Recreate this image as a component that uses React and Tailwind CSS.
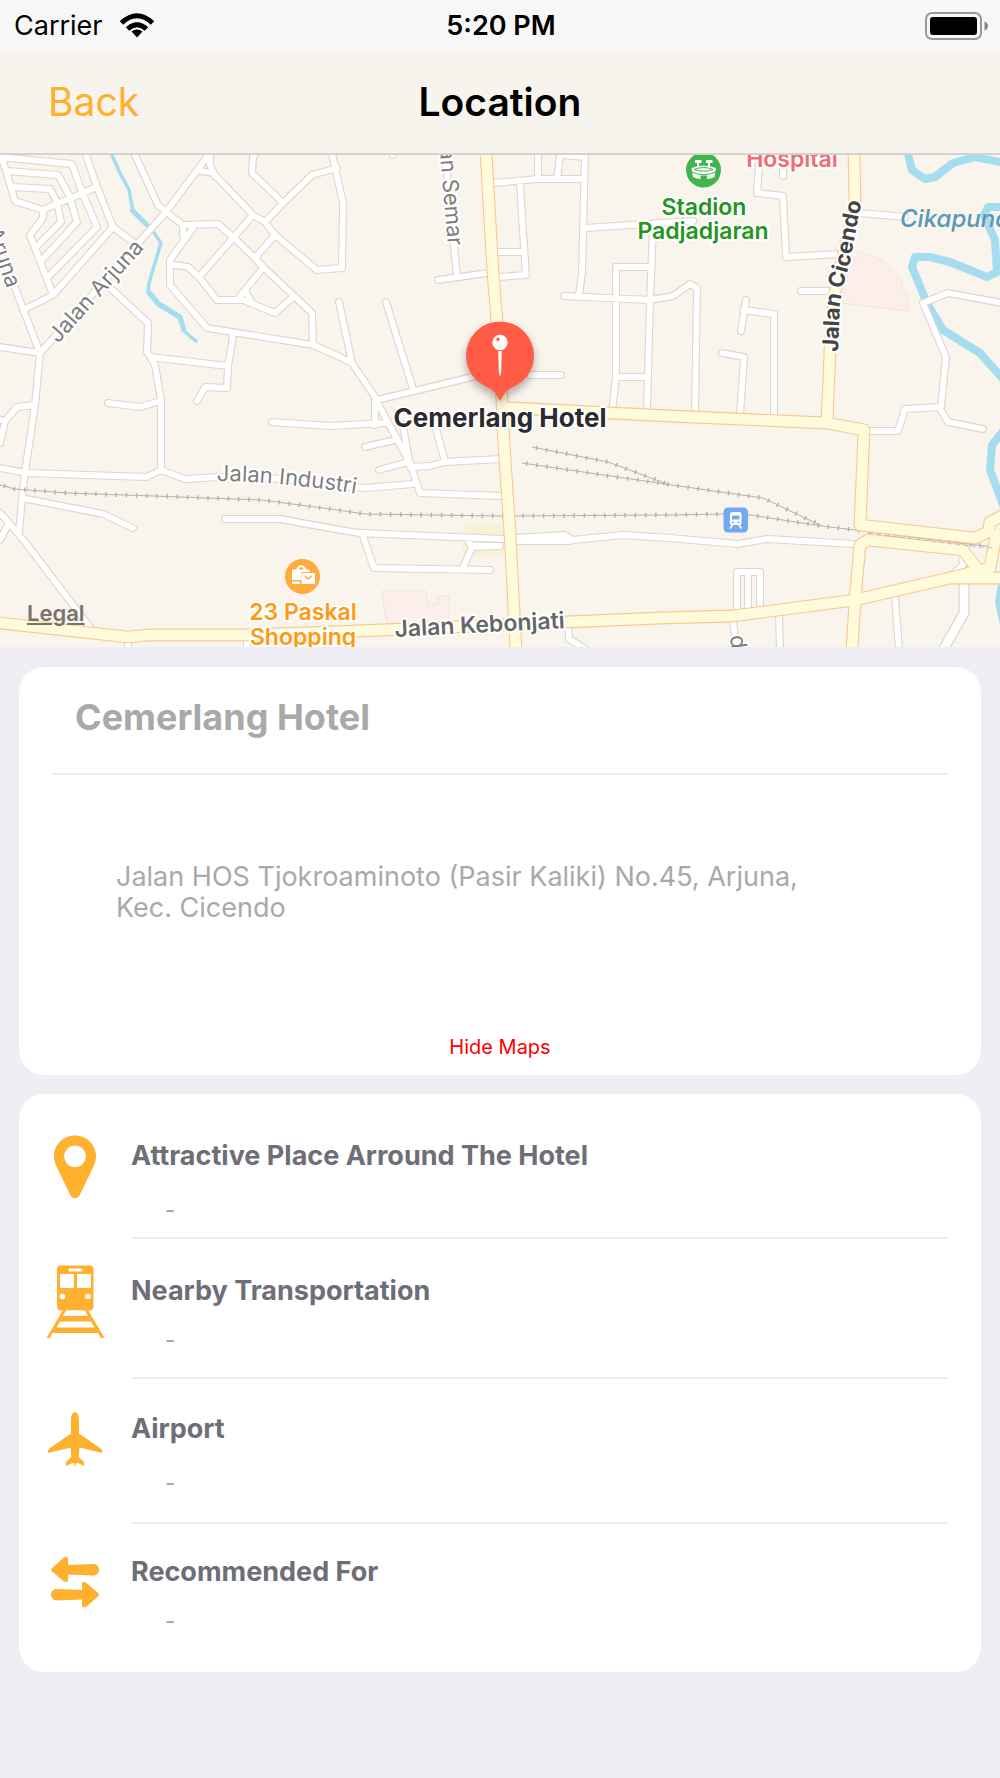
import React, { useState } from 'react';

const SMALL_ROADS = [
  'M0 157L72 164L82 192L97 227L47 278',
  'M7 171L58 175L69 195L77 222L42 260',
  'M12 187L50 189L57 202L61 222L35 248',
  'M2 158L15 201L43 210L97 187',
  'M43 210V218L30 235L53 295L113 227',
  'M53 295L23 310',
  'M86 155L97 187L113 227L137 245',
  'M0 250L15 288L40 353',
  'M0 347L40 353L35 405L25 472L22 498L19 532',
  'M40 353L166 212L210 153',
  'M35 405L17 407L5 421L0 443M0 420L5 421',
  'M107 285L148 323L147 352L155 365L161 400V470',
  'M150 357L228 366',
  'M233 333L232 343L228 366L227 388L205 387L197 401',
  'M108 403L140 407L160 401',
  'M135 155L158 205L166 212L183 225L218 224L233 237L255 258L263 267L293 295L312 313L313 345',
  'M183 225V236M193 228L170 260V285L207 328L313 345L340 357L352 363',
  'M170 264L188 267L199 277L217 300H243L275 313L293 297',
  'M199 277L253 215',
  'M210 155V165L215 176M200 171L213 173L253 215L265 222L275 235L317 270L342 268L343 203L335 167L332 153',
  'M255 258L275 235',
  'M263 268L245 290L251 302M245 290L238 299',
  'M265 222L283 203L312 175L337 168',
  'M256 153L253 157L252 173L283 203',
  'M339 302L352 363L377 400',
  'M386 302L413 389',
  'M377 400L472 377M530 375H561',
  'M438 280L488 273M445 155L457 276',
  'M393 152V155',
  'M493 183L538 179H582M538 155V179M560 155L557 179M563 155L585 157',
  'M520 182L522 217L526 275L498 277M497 252H522',
  'M585 155L582 273L579 295',
  'M585 228L693 221',
  'M564 296L650 300L673 296L690 284L697 288L695 415',
  'M653 228L650 300L647 412',
  'M652 267H616V377L612 412M616 377H647',
  'M759 165L757 193L783 196L786 257L840 254M783 165V176',
  'M860 213L905 217M801 291H828',
  'M746 300L741 331M743 310L774 314V415',
  'M722 353L744 357L740 415',
  'M1002 303L948 293L923 303L946 357L941 407L905 409L898 431H868M939 407L948 422L983 429',
  'M0 468L27 473L147 477L161 470L185 479L220 477L290 479L345 486L365 488L413 484',
  'M22 498L103 514L133 528',
  'M225 519H280L340 530L360 533L503 539L515 538L565 535L572 540L623 535L670 538L738 544L767 539L855 544',
  'M515 541H570',
  'M272 422L330 426L385 423',
  'M0 513L9 523L25 542L92 630M0 540L8 525',
  'M128 636V650M247 636V650',
  'M375 400V425M377 402L410 463L420 493L502 496',
  'M365 447L395 440M379 470L408 462M403 425L410 467M435 425L445 462',
  'M410 467L430 466L445 462L500 459',
  'M362 533L374 568L490 570M463 568L472 547L500 546M466 538L472 547',
  'M568 625L569 639L587 650',
  'M737 612V572H760V612M748 572V612',
  'M779 615L780 650M733 620L736 650M895 597L899 650',
  'M962 555L963 565L950 577',
];

const MAIN_ROADS = [
  'M486 153L493 273L497 322L502 400L503 430L510 533L516 650',
  'M502 408H512L670 416L827 423L864 430L860 525L975 538L988 532L990 522L1004 515',
  'M854 153L855 205L845 247L834 297L830 350L827 423',
  'M852 650L855 600L860 545L868 540L963 550L978 570',
  'M0 623L128 637L148 635H247L357 631L660 618L732 616L855 600L950 578H1004M950 578L990 568L997 530',
];

const RAILS = [
  'M0 485L15 489L67 493L153 496L262 500L330 509L365 514L502 516L670 515L723 514L750 515L822 526L880 533L993 547',
  'M532 447L608 462L667 484',
  'M522 463L665 484L763 498L822 526',
];

const WATER =
  'M907 150L912 170L925 179L935 177L953 163L975 157L1005 163M1004 207H988L984 215L995 240L997 272L987 277L950 262L930 257H915L912 267L927 303L943 330L980 353L1004 380M1004 430L992 445L990 470L1004 507M1002 585L999 602L1004 625';

const ROWS = [
  { id: 'place', title: 'Attractive Place Arround The Hotel', icon: PinIcon, row: 'min-h-[145px] pt-[34px]', gap: 'mt-[22px]' },
  { id: 'transport', title: 'Nearby Transportation', icon: TrainIcon, row: 'min-h-[140px] pt-6', gap: 'mt-[17px]' },
  { id: 'airport', title: 'Airport', icon: PlaneIcon, row: 'min-h-[145px] pt-[22px]', gap: 'mt-[22px]' },
  { id: 'recommended', title: 'Recommended For', icon: ArrowsIcon, row: 'min-h-[148px] pt-5', gap: 'mt-[17px]' },
];

function PinIcon() {
  return (
    <svg viewBox="37 1128 76 76" className="size-[76px] shrink-0 fill-[#ffb02e]" aria-hidden="true">
      <path
        fillRule="evenodd"
        d="M75 1135.500C63.500 1135.500 54 1144.500 54 1156C54 1160 55 1163 56.500 1166.500L70.500 1195.500C72.500 1199 77.500 1199 79.500 1195.500L93.500 1166.500C95 1163 96 1160 96 1156C96 1144.500 86.500 1135.500 75 1135.500ZM75 1145.500A10.800 10.800 0 1 1 75 1167.100A10.800 10.800 0 1 1 75 1145.500Z"
      />
    </svg>
  );
}

function TrainIcon() {
  return (
    <svg viewBox="37 1263 76 76" className="size-[76px] shrink-0" aria-hidden="true">
      <rect x="57" y="1265.500" width="36.500" height="45" rx="4" fill="#ffb02e" />
      <g fill="#fff">
        <rect x="68.500" y="1268.500" width="14" height="3" rx="1" />
        <rect x="60" y="1274" width="14" height="14" />
        <rect x="77" y="1274" width="14" height="14" />
        <circle cx="62.500" cy="1296.500" r="2.800" />
        <circle cx="88" cy="1296.500" r="2.800" />
      </g>
      <path d="M63 1310H67L65.500 1316H84.500L83 1310H88L104.500 1338H101L98 1333H52.500L50 1338H46.500Z" fill="#ffb02e" />
      <path d="M66 1310.500H85L88 1316H63ZM60 1321.500H91L94.500 1327.500H56.500Z" fill="#fff" />
    </svg>
  );
}

function PlaneIcon() {
  return (
    <svg viewBox="37 1401 76 76" className="size-[76px] shrink-0 fill-[#ffb02e]" aria-hidden="true">
      <path d="M75 1412C77.500 1412 79 1416 79 1420V1433.500L100 1448C102 1449.500 102.500 1451 102 1453L79.500 1447.500C79 1451 79 1454 78.700 1457L83 1461C84.500 1462.500 84.500 1464 84 1466L79 1463.500L76 1463L75 1467.500L74 1463L71 1463.500L66.300 1466C65.500 1464 65.800 1462.500 67 1461L71.300 1457C71 1454 71 1451 70.800 1447.500L48 1453C47.500 1451 48 1449.500 50 1448L71 1433.500V1420C71 1416 72.500 1412 75 1412Z" />
    </svg>
  );
}

function ArrowsIcon() {
  return (
    <svg viewBox="37 1544 76 76" className="size-[76px] shrink-0 fill-[#ffb02e]" aria-hidden="true">
      <path d="M52 1568L64 1557.500C66 1556.500 68 1557 68 1559V1565L93 1564C97 1564 99 1566.500 99 1569.500S97 1575.500 93 1575.500L68 1574.500V1580C68 1582 66 1582.500 64 1581.500L52 1571.500C51 1570.500 51 1569 52 1568Z" />
      <path d="M98 1593L86 1582.500C84 1581.500 82 1582 82 1584V1590L57 1589C53 1589 51 1591.500 51 1594.500S53 1600.500 57 1600.500L82 1599.500V1605C82 1607.500 84 1608 86 1607L98 1596.500C99.300 1595.500 99.300 1594 98 1593Z" />
    </svg>
  );
}

function StatusBar() {
  return (
    <div className="grid h-[51px] grid-cols-3 items-center bg-[#f7f7f7] pl-[14px] pr-3 text-[27px] leading-8">
      <div className="flex items-center gap-[17px]">
        <span>Carrier</span>
        <svg viewBox="121 12 34 25" className="h-[25px] w-[34px]" fill="none" stroke="#000" strokeWidth="5" aria-hidden="true">
          <path d="M122.500 22Q138 7.500 153.500 22" />
          <path d="M128.500 28Q138 19.500 147.500 28" />
          <path d="M132.500 30.500Q138 26.500 143.500 30.500L138 36.500Z" fill="#000" stroke="none" />
        </svg>
      </div>
      <span className="text-center font-semibold">5:20 PM</span>
      <svg viewBox="925 10 63 28" className="h-7 w-[63px] justify-self-end" aria-hidden="true">
        <rect x="926" y="11" width="55" height="26" rx="6" fill="none" stroke="#999" strokeWidth="2" />
        <rect x="930" y="15" width="47" height="18" rx="3" />
        <path d="M984.500 19.500Q988 21 988 24T984.500 28.500Z" fill="#888" />
      </svg>
    </div>
  );
}

function MapView() {
  return (
    <section aria-label="Map" className="relative h-[492px] overflow-hidden bg-[#f9f4ec]">
      <svg viewBox="0 155 1000 492" preserveAspectRatio="xMidYMid slice" className="size-full" fontFamily="Inter, sans-serif">
        <defs>
          <path id="arjuna" d="M58 344L150 242" />
          <path id="industri" d="M217 481Q280 481 370 496" />
          <path id="cicendo" d="M838 352L840 303Q843 285 850 262L864 188" />
          <filter id="pinShadow" x="-30%" y="-30%" width="160%" height="160%">
            <feDropShadow dx="0" dy="5" stdDeviation="4" floodOpacity="0.3" />
          </filter>
        </defs>

        {/* areas */}
        <g fill="#fbeeeb" stroke="#f8e1df" strokeWidth="1">
          <path d="M858 251L882 260L902 280V293H908V311L842 303L850 257L858 258Z" />
          <path d="M382 591H426L428 604H438V596H449V624H388L385 613Z" />
        </g>
        <rect x="463" y="523" width="41" height="34" fill="#f9f0d8" />

        {/* rivers */}
        <g fill="none" stroke="#a5dcf0" strokeLinejoin="round">
          <path d={WATER} strokeWidth="8" />
          <path d="M111 153L120 173L129 190L133 211L152 230L161 243L149 283L148 293L158 305L180 318L185 332L197 342" strokeWidth="3.500" />
          <path d="M131 209L150 228M148 291L158 303L180 317L184 331" strokeWidth="5" />
        </g>

        {/* roads: casing first, then fill */}
        <g fill="none" strokeLinecap="round" strokeLinejoin="round">
          <path d={SMALL_ROADS.join('')} stroke="#ddd6cc" strokeWidth="8" />
          <path d="M964 580V613L943 650" stroke="#ddd6cc" strokeWidth="11" />
          <path d={SMALL_ROADS.join('')} stroke="#fff" strokeWidth="5.800" />
          <path d="M964 580V613L943 650" stroke="#fff" strokeWidth="8.500" />
        </g>
        <path d="M515 536L565 534L570 541H515ZM470 543H502V549H470Z" fill="#fff" />
        {RAILS.map((d) => (
          <g key={d} fill="none" stroke="#b2b2b2">
            <path d={d} strokeWidth="1" />
            <path d={d} strokeWidth="4.500" strokeDasharray="1.500 8.700" strokeDashoffset="-4" />
          </g>
        ))}
        <g fill="none" strokeLinejoin="round">
          <path d={MAIN_ROADS.join('')} stroke="#f8c893" strokeWidth="12.800" />
          <path d={MAIN_ROADS.join('')} stroke="#fdfbda" strokeWidth="10.600" />
        </g>
        <path d="M868 533L960 545L993 548" fill="none" stroke="#c5c0ae" strokeWidth="1" strokeDasharray="5 3" />

        {/* street names */}
        <g fill="#7d7d7d" stroke="#fff" strokeWidth="4" strokeLinejoin="round" style={{ paintOrder: 'stroke' }} fontSize="22">
          <text><textPath href="#arjuna">Jalan Arjuna</textPath></text>
          <text><textPath href="#industri">Jalan Industri</textPath></text>
          <text transform="translate(7 289) rotate(71)" textAnchor="end">Jalan Aruna</text>
          <text transform="translate(448 246) rotate(85)" textAnchor="end">Jalan Semar</text>
          <text transform="translate(730 636) rotate(83)">d</text>
          <text transform="translate(395 637) rotate(-3)" fontSize="23" fontWeight="600" fill="#666">Jalan Kebonjati</text>
          <text fontSize="22" fontWeight="700" fill="#444"><textPath href="#cicendo">Jalan Cicendo</textPath></text>
          <text x="900" y="227" fontSize="24" fontWeight="500" fontStyle="italic" fill="#5598b8" stroke="none">Cikapundung</text>
        </g>

        {/* places */}
        <g stroke="#fff" strokeWidth="4" strokeLinejoin="round" style={{ paintOrder: 'stroke' }} fontSize="23" fontWeight="600" textAnchor="middle">
          <text x="792" y="167" fill="#f26b70">Hospital</text>
          <text x="704" y="215" fill="#23961f">Stadion</text>
          <text x="703" y="239" fill="#23961f">Padjadjaran</text>
          <text x="303" y="620" fill="#ff9a12">23 Paskal</text>
          <text x="303" y="645" fill="#ff9a12">Shopping</text>
        </g>

        <circle cx="703.500" cy="170" r="17.500" fill="#3fb54c" />
        <g fill="#fff">
          <rect x="695" y="160" width="6.500" height="3" />
          <rect x="706" y="160" width="6.500" height="3" />
          <rect x="697" y="162" width="2" height="5" />
          <rect x="708" y="162" width="2" height="5" />
          <path d="M691.500 168Q703.500 163 716 168L714.500 177Q711 179 707 179V175.500H700.500V179Q696 179 693 177Z" />
          <path d="M694 169.500Q703.500 165.500 713 169.500Q703.500 173 694 169.500ZM692 172Q703.500 177.500 715.500 172" fill="none" stroke="#3fb54c" strokeWidth="1" />
        </g>

        <circle cx="302.500" cy="576.500" r="17.500" fill="#ffab3d" />
        <g>
          <path d="M297.500 570V569Q301 563 305 569V570" fill="none" stroke="#fff" strokeWidth="2.200" />
          <path d="M292 569.500H309.500V572H301.500V580H292ZM292 581.500H300V584H292Z" fill="#fff" />
          <rect x="301.500" y="573" width="13.500" height="11" rx="1" fill="#fff" />
          <path d="M305 575.500Q308.200 582 311.500 575.500" fill="none" stroke="#ffab3d" strokeWidth="1.500" />
        </g>

        <rect x="723.500" y="507.500" width="24.500" height="25" rx="4.500" fill="#74a9f0" />
        <path fillRule="evenodd" fill="#fff" d="M732.500 512H739Q741.500 512 741.500 515V523Q741.500 525 739.500 525H732Q730 525 730 523V515Q730 512 732.500 512ZM732 515.500V519.500H739.500V515.500ZM732 521.500V523H734V521.500ZM737.500 521.500V523H739.500V521.500Z" />
        <path d="M732.500 525L730 528.500M739 525L741.500 528.500" stroke="#fff" strokeWidth="1.500" />

        {/* hotel marker */}
        <path
          d="M500 401L495 393C492 389 488 388 484 385.500C473 379.500 466 369 466 355.500A34 34 0 0 1 534 355.500C534 369 527 379.500 516 385.500C512 388 508 389 505 393Z"
          fill="#ff5c47"
          filter="url(#pinShadow)"
        />
        <circle cx="500" cy="342.500" r="7.700" fill="#fff" />
        <circle cx="498" cy="339.300" r="1.700" fill="#ff5c47" />
        <path d="M498.300 351H501.700L501.200 372L500 377L498.800 372Z" fill="#fff" />
        <text x="500" y="427" textAnchor="middle" fontSize="26" fontWeight="700" fill="#2b2b2b" stroke="#fff" strokeWidth="4" strokeLinejoin="round" style={{ paintOrder: 'stroke' }}>
          Cemerlang Hotel
        </text>
      </svg>
      <a href="#legal" className="absolute bottom-5 left-[27px] text-[22px] leading-7 font-semibold text-[#77736d] underline">
        Legal
      </a>
    </section>
  );
}

const InfoRow = ({ item, last }) => {
  const Icon = item.icon;
  return (
    <li className={`flex gap-[18px] pl-[18px] pr-[34px] ${item.row}`}>
      <Icon />
      <div className={`flex-1 pt-3 ${last ? '' : 'border-b-2 border-[#ededf2]'}`}>
        <h2 className="text-[27px] leading-8 font-bold text-[#6d6e78]">{item.title}</h2>
        <p className={`pl-[34px] text-[22px] leading-8 font-medium text-[#a9a9a9] ${item.gap}`}>-</p>
      </div>
    </li>
  );
};

export default function App() {
  const [showMap, setShowMap] = useState(true);

  return (
    <div className="min-h-screen bg-[#efeef4] font-[Inter,sans-serif] text-black">
      <StatusBar />
      <header className="grid h-[104px] grid-cols-3 items-center border-b-2 border-[#d5d1cb] bg-[#f7f4ee] text-[39px] leading-12">
        <button type="button" className="justify-self-start pl-[48px] text-[#ffb02e]">Back</button>
        <h1 className="text-center font-semibold">Location</h1>
      </header>

      {showMap && <MapView />}

      <main className="flex flex-col gap-[19px] px-[19px] pt-5 pb-6">
        <section className="flex min-h-[408px] flex-col rounded-[25px] bg-white px-[34px] pb-3">
          <h2 className="border-b-2 border-[#ededf2] pt-[27px] pb-[33px] pl-[22px] text-[36px] leading-[46px] font-bold text-[#a9a9a9]">
            Cemerlang Hotel
          </h2>
          <p className="mt-[86px] max-w-[780px] pl-[63px] text-[27px] leading-[31px] text-[#a9a9a9]">
            Jalan HOS Tjokroaminoto (Pasir Kaliki) No.45, Arjuna, Kec. Cicendo
          </p>
          <button type="button" onClick={() => setShowMap(!showMap)} className="mt-auto self-center text-[20px] leading-8 text-[#ff0000]">
            {showMap ? 'Hide Maps' : 'Show Maps'}
          </button>
        </section>

        <ul className="rounded-[25px] bg-white">
          {ROWS.map((item, i) => (
            <InfoRow key={item.id} item={item} last={i === ROWS.length - 1} />
          ))}
        </ul>
      </main>
    </div>
  );
}
